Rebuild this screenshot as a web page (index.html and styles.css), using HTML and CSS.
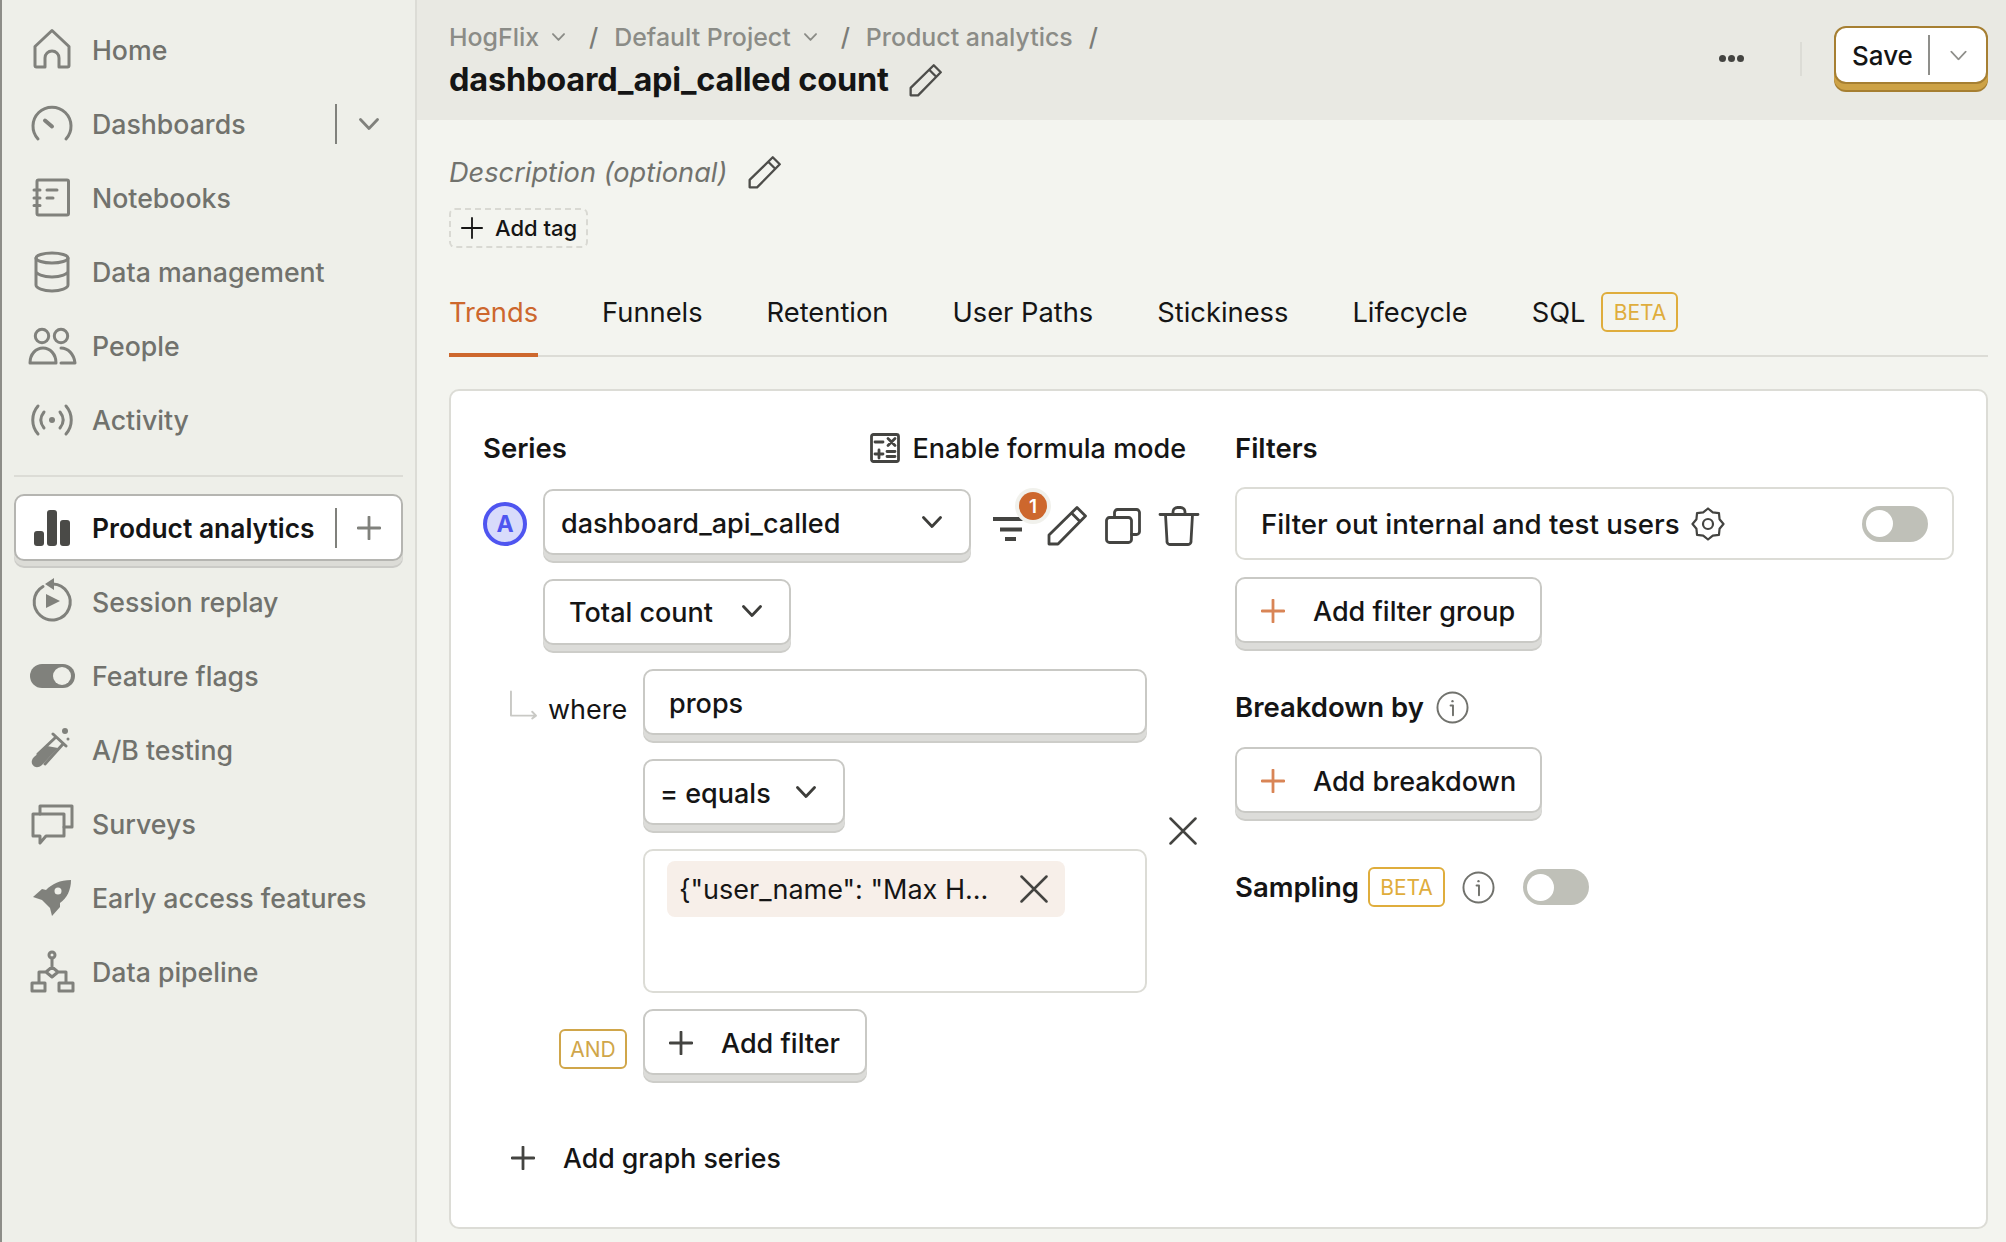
FILE: index.html
```html
<!DOCTYPE html>
<html lang="en">

<head>
  <meta charset="UTF-8">
  <title>dashboard_api_called count</title>
  <link rel="stylesheet" href="styles.css">
</head>

<body>
  <svg class="defs" width="0" height="0">
    <symbol id="i-pencil" viewBox="0 0 40 40">
      <path d="M2 38V29L30 1.500 38.500 10 11 38ZM24.500 7 33 15.500" />
    </symbol>
    <symbol id="i-plus" viewBox="0 0 24 24">
      <path d="M12 1V23M1 12H23" />
    </symbol>
    <symbol id="i-chev" viewBox="0 0 20 12">
      <path d="M1.500 1.500 10 10.500 18.500 1.500" />
    </symbol>
    <symbol id="i-x" viewBox="0 0 28 28">
      <path d="M1.500 1.500 26.500 26.500M26.500 1.500 1.500 26.500" />
    </symbol>
    <symbol id="i-info" viewBox="0 0 34 34">
      <circle cx="17" cy="17" r="15.500" />
      <path d="M15 15H17.500V25" />
      <circle class="solid" cx="17" cy="10.500" r="1.200" />
    </symbol>
  </svg>

  <div class="app">
    <nav class="sidebar">
      <a class="nav-row">
        <svg class="nav-icon" viewBox="0 0 44 44"><path d="M5 18.500 22 2.500 39 18.500V37.500A1.500 1.500 0 0 1 37.500 39H29V30A7 7 0 0 0 15 30V39H6.500A1.500 1.500 0 0 1 5 37.500Z" /></svg>
        <span>Home</span>
      </a>
      <a class="nav-row">
        <svg class="nav-icon" viewBox="0 0 44 44"><path d="M8 37A19 19 0 1 1 36 37" /><path class="needle" d="M15 18.500 22 24.500" /></svg>
        <span>Dashboards</span>
        <span class="nav-side"><svg class="chev-sm" viewBox="0 0 20 12"><use href="#i-chev" /></svg></span>
      </a>
      <a class="nav-row">
        <svg class="nav-icon" viewBox="0 0 44 44"><path d="M8.500 4H37A1.500 1.500 0 0 1 38.500 5.500V37.500A1.500 1.500 0 0 1 37 39H8.500A1.500 1.500 0 0 1 7 37.500V5.500A1.500 1.500 0 0 1 8.500 4ZM4 14H10M4 22H10M4 29.500H10M17 14H27M17 22H23" /></svg>
        <span>Notebooks</span>
      </a>
      <a class="nav-row">
        <svg class="nav-icon" viewBox="0 0 44 44"><ellipse cx="22" cy="8" rx="16" ry="5" /><path d="M6 8V35C6 38 13 41 22 41S38 38 38 35V8M6 21C6 24 13 27 22 27S38 24 38 21" /></svg>
        <span>Data management</span>
      </a>
      <a class="nav-row">
        <svg class="nav-icon" viewBox="0 0 44 44"><circle cx="12" cy="12" r="6.700" /><circle cx="31" cy="12" r="6.700" /><path d="M0 39C0 30 6 24 13 24S26 30 26 39ZM31 24C38 24 44 30 45 39H31" /></svg>
        <span>People</span>
      </a>
      <a class="nav-row">
        <svg class="nav-icon" viewBox="0 0 44 44"><circle class="solid" cx="22" cy="22" r="3" /><path d="M8 8C1 16 1 28 8 36M14 14C10 19 10 25 14 30M36 8C43 16 43 28 36 36M30 14C34 19 34 25 30 30" /></svg>
        <span>Activity</span>
      </a>

      <div class="nav-divider"></div>

      <div class="nav-row-wrap">
        <a class="nav-row nav-active">
          <svg class="nav-icon" viewBox="0 0 44 44"><rect class="solid" x="4" y="25" width="10" height="15" rx="3" /><rect class="solid" x="17" y="4" width="10" height="36" rx="3" /><rect class="solid" x="30" y="14" width="10" height="26" rx="3" /></svg>
          <span>Product analytics</span>
          <span class="nav-side"><svg class="plus-sm" viewBox="0 0 24 24"><use href="#i-plus" /></svg></span>
        </a>
      </div>
      <a class="nav-row">
        <svg class="nav-icon" viewBox="0 0 44 44"><path d="M13 6.500A18 18 0 1 0 23 4" /><path class="solid" d="M24 -2 15 4 24 10ZM16 14 30 21 16 28Z" /></svg>
        <span>Session replay</span>
      </a>
      <a class="nav-row">
        <svg class="nav-icon" viewBox="0 0 44 44"><rect class="solid" x="0" y="10" width="45" height="24" rx="12" /><circle class="knob" cx="32" cy="22" r="9" /></svg>
        <span>Feature flags</span>
      </a>
      <a class="nav-row">
        <svg class="nav-icon" viewBox="0 0 44 44"><path class="solid" d="M4 29 17 18 28 20 12 37C5 43-2 35 4 29Z" /><path d="M23 6 36 18M26 9 8 26M33 16 15 36" /><circle class="solid" cx="35" cy="3" r="3" /><circle class="solid" cx="38" cy="11" r="1.500" /></svg>
        <span>A/B testing</span>
      </a>
      <a class="nav-row">
        <svg class="nav-icon" viewBox="0 0 44 44"><path d="M10 12V4H42V25H34" /><path d="M3 12H34V34H16L10 41V34H3Z" /></svg>
        <span>Surveys</span>
      </a>
      <a class="nav-row">
        <svg class="nav-icon" viewBox="0 0 44 44"><path class="solid rocket" d="M41 4C30 4 22 8 16 14L12 13 3 21 12 24 20 32 22 40 30 31C30 29 30 28 30 27 37 22 41 14 41 4ZM28 11.500A3.500 3.500 0 1 1 28 18.500 3.500 3.500 0 0 1 28 11.500Z" /></svg>
        <span>Early access features</span>
      </a>
      <a class="nav-row">
        <svg class="nav-icon" viewBox="0 0 44 44"><circle cx="22" cy="5" r="3" /><path d="M22 8V17M22 17 28 22 22 27 16 22ZM16 22H9V33M28 22H36V33M2 33H15V41H2ZM29 33H43V41H29Z" /></svg>
        <span>Data pipeline</span>
      </a>
    </nav>

    <main class="main">
      <header class="topbar">
        <div class="topbar-left">
          <div class="crumbs">
            <span>HogFlix</span>
            <svg class="chev-xs" viewBox="0 0 20 12"><use href="#i-chev" /></svg>
            <span class="crumb-sep">/</span>
            <span>Default Project</span>
            <svg class="chev-xs" viewBox="0 0 20 12"><use href="#i-chev" /></svg>
            <span class="crumb-sep">/</span>
            <span>Product analytics</span>
            <span class="crumb-sep">/</span>
          </div>
          <div class="title-row">
            <h1>dashboard_api_called count</h1>
            <svg class="pencil-md" viewBox="0 0 40 40"><use href="#i-pencil" /></svg>
          </div>
        </div>
        <div class="topbar-right">
          <span class="dots"><i></i><i></i><i></i></span>
          <span class="topbar-divider"></span>
          <div class="save-btn">
            <span class="save-label">Save</span>
            <span class="save-side"><svg class="chev-save" viewBox="0 0 20 12"><use href="#i-chev" /></svg></span>
          </div>
        </div>
      </header>

      <div class="content">
        <div class="description">
          <span>Description (optional)</span>
          <svg class="pencil-md" viewBox="0 0 40 40"><use href="#i-pencil" /></svg>
        </div>
        <div class="add-tag">
          <svg class="plus-tag" viewBox="0 0 24 24"><use href="#i-plus" /></svg>
          <span>Add tag</span>
        </div>

        <div class="tabs">
          <a class="tab tab-active">Trends</a>
          <a class="tab">Funnels</a>
          <a class="tab">Retention</a>
          <a class="tab">User Paths</a>
          <a class="tab">Stickiness</a>
          <a class="tab">Lifecycle</a>
          <a class="tab tab-sql">SQL <span class="badge badge-beta">BETA</span></a>
        </div>

        <section class="card">
          <div class="col-series">
            <div class="series-head">
              <h3>Series</h3>
              <div class="formula">
                <svg class="calc" viewBox="0 0 30 30">
                  <rect x="1.500" y="1.500" width="27" height="27" rx="2" />
                  <path d="M5 9H13M18 5.500 25 12.500M25 5.500 18 12.500M5 21H13M9 17V25M17 18.500H25M17 23.500H25" />
                </svg>
                <span>Enable formula mode</span>
              </div>
            </div>

            <div class="series-row">
              <span class="letter">A</span>
              <div class="btn select-event">
                <span>dashboard_api_called</span>
                <svg class="chev" viewBox="0 0 20 12"><use href="#i-chev" /></svg>
              </div>
              <div class="series-tools">
                <span class="filter-icon">
                  <svg class="filter-lines" viewBox="0 0 30 24"><path d="M0 2H30M7 12.500H29M12 22H23" /></svg>
                  <span class="filter-badge">1</span>
                </span>
                <svg class="tool-pencil" viewBox="0 0 40 40"><use href="#i-pencil" /></svg>
                <svg class="tool-copy" viewBox="0 0 36 36"><rect x="1.500" y="9.500" width="25" height="25" rx="3" /><path d="M9.500 9.500V4.500A3 3 0 0 1 12.500 1.500H31.500A3 3 0 0 1 34.500 4.500V23.500A3 3 0 0 1 31.500 26.500H26.500" /></svg>
                <svg class="tool-trash" viewBox="0 0 40 40"><path d="M1 8.500H39M14 8.500V6A4.500 4.500 0 0 1 18.500 1.500H21.500A4.500 4.500 0 0 1 26 6V8.500M6.500 8.500 8 35A3 3 0 0 0 11 38.500H29A3 3 0 0 0 32 35L33.500 8.500" /></svg>
              </div>
            </div>

            <div class="btn select-math">
              <span>Total count</span>
              <svg class="chev" viewBox="0 0 20 12"><use href="#i-chev" /></svg>
            </div>

            <div class="where-grid">
              <div class="where-label">
                <svg class="where-arrow" viewBox="0 0 28 28"><path d="M1 0V25H26M23 21 27 25 23 28" /></svg>
                <span>where</span>
              </div>
              <div class="btn input-props">props</div>
              <span class="remove-filter"><svg class="x-lg" viewBox="0 0 28 28"><use href="#i-x" /></svg></span>
              <div class="btn select-op">
                <span>= equals</span>
                <svg class="chev" viewBox="0 0 20 12"><use href="#i-chev" /></svg>
              </div>
              <div class="value-box">
                <div class="chip">
                  <span>{"user_name": "Max H...</span>
                  <svg class="x-lg" viewBox="0 0 28 28"><use href="#i-x" /></svg>
                </div>
              </div>
            </div>

            <div class="and-row">
              <div class="and-cell"><span class="badge badge-and">AND</span></div>
              <div class="btn btn-add add-filter">
                <svg class="plus" viewBox="0 0 24 24"><use href="#i-plus" /></svg>
                <span>Add filter</span>
              </div>
            </div>

            <div class="add-series">
              <svg class="plus" viewBox="0 0 24 24"><use href="#i-plus" /></svg>
              <span>Add graph series</span>
            </div>
          </div>

          <div class="col-filters">
            <h3>Filters</h3>
            <div class="test-users">
              <span>Filter out internal and test users</span>
              <svg class="gear" viewBox="0 0 34 34">
                <path d="M32.500 17 28.550 21.780 27.960 27.960 21.780 28.550 17 32.500 12.220 28.550 6.040 27.960 5.450 21.780 1.500 17 5.450 12.220 6.040 6.040 12.220 5.450 17 1.500 21.780 5.450 27.960 6.040 28.550 12.220Z" />
                <circle cx="17" cy="17" r="5" />
              </svg>
              <span class="toggle toggle-right"><i></i></span>
            </div>
            <div class="btn btn-add btn-orange add-group">
              <svg class="plus" viewBox="0 0 24 24"><use href="#i-plus" /></svg>
              <span>Add filter group</span>
            </div>

            <div class="breakdown-head">
              <h3>Breakdown by</h3>
              <svg class="info" viewBox="0 0 34 34"><use href="#i-info" /></svg>
            </div>
            <div class="btn btn-add btn-orange add-breakdown">
              <svg class="plus" viewBox="0 0 24 24"><use href="#i-plus" /></svg>
              <span>Add breakdown</span>
            </div>

            <div class="sampling">
              <h3>Sampling</h3>
              <span class="badge badge-beta">BETA</span>
              <svg class="info" viewBox="0 0 34 34"><use href="#i-info" /></svg>
              <span class="toggle"><i></i></span>
            </div>
          </div>
        </section>
      </div>
    </main>
  </div>
</body>

</html>
```

FILE: styles.css
```css
* {
  box-sizing: border-box;
}

html,
body {
  margin: 0;
  height: 100%;
  overflow: hidden;
}

body {
  font-family: 'Inter', 'Liberation Sans', sans-serif;
  font-size: 27px;
  color: #151515;
  background: #f3f4ef;
}

svg {
  fill: none;
  stroke: currentColor;
  stroke-width: 2.800;
  stroke-linecap: round;
  stroke-linejoin: round;
  overflow: visible;
  flex: none;
}

.defs {
  position: absolute;
}

.solid {
  fill: currentColor;
  stroke: none;
}

h1,
h3 {
  margin: 0;
}

h3 {
  font-size: 27.500px;
  font-weight: 600;
  line-height: 40px;
  white-space: nowrap;
}

.app {
  display: flex;
  height: 1242px;
}

/* sidebar */
.sidebar {
  width: 417px;
  flex: none;
  padding: 13px 12px 0 12px;
  background: #eeefe9;
  border-left: 2px solid #8d8d88;
  border-right: 2px solid #dcdcd6;
}

.nav-row {
  display: flex;
  align-items: center;
  gap: 18px;
  height: 74px;
  padding: 0 2px 0 16px;
  font-size: 26.700px;
  font-weight: 500;
  color: #71726d;
  white-space: nowrap;
}

.nav-icon {
  width: 44px;
  height: 44px;
  color: #80817c;
  stroke-width: 3;
}

.needle {
  stroke-width: 4;
}

.knob {
  fill: #eeefe9;
  stroke: none;
}

.rocket {
  fill-rule: evenodd;
}

.nav-side {
  margin-left: auto;
  width: 66px;
  height: 40px;
  display: flex;
  align-items: center;
  justify-content: center;
  border-left: 2px solid #80817c;
}

.chev-sm {
  width: 20px;
  height: 12px;
  color: #80817c;
}

.plus-sm {
  width: 24px;
  height: 24px;
  color: #80817c;
}

.nav-divider {
  height: 2px;
  margin: 18px 0 13px;
  background: #dcdcd6;
}

.nav-row-wrap {
  height: 75px;
  padding-top: 4px;
}

.nav-active {
  height: 67px;
  background: #fff;
  color: #151515;
  font-size: 26.400px;
  font-weight: 600;
  border: 2px solid #b5b5b1;
  border-radius: 10px;
  padding: 0 0 0 14px;
  box-shadow: 0 5px 0 #dcdcd7, 0 7px 0 #cbcbc7;
}

.nav-active .nav-icon {
  color: #4a4a47;
}

/* top bar */
.main {
  flex: 1;
  min-width: 0;
}

.topbar {
  height: 120px;
  display: flex;
  justify-content: space-between;
  padding: 0 18px 0 32px;
  background: #e9e9e3;
}

.crumbs {
  display: flex;
  align-items: center;
  height: 34px;
  margin-top: 20px;
  font-size: 24.900px;
  font-weight: 500;
  color: #8b8c87;
}

.chev-xs {
  width: 13px;
  height: 8px;
  margin-left: 13px;
}

.crumb-sep {
  margin: 0 16px 0 24px;
  color: #7b7c77;
}

.crumb-sep:last-child {
  margin-left: 16px;
}

.title-row {
  display: flex;
  align-items: center;
  gap: 20px;
  height: 44px;
  margin-top: 4px;
}

h1 {
  font-size: 32.500px;
  font-weight: 700;
  line-height: 44px;
  letter-spacing: -0.2px;
}

.pencil-md {
  width: 33px;
  height: 33px;
  color: #4d4d4a;
}

.topbar-right {
  display: flex;
  align-items: flex-start;
}

.dots {
  display: flex;
  gap: 2px;
  margin-top: 55px;
  margin-right: 56px;
}

.dots i {
  width: 7px;
  height: 7px;
  border-radius: 50%;
  background: #444441;
}

.topbar-divider {
  width: 2px;
  height: 34px;
  margin-top: 42px;
  margin-right: 32px;
  background: #dcdcd6;
}

.save-btn {
  display: flex;
  align-items: center;
  width: 154px;
  height: 58px;
  margin-top: 26px;
  background: #fff;
  border: 2px solid #a67f32;
  border-radius: 12px;
  box-shadow: 0 6px 0 #cda246, 0 8px 0 #a67f32;
}

.save-label {
  width: 92px;
  padding-left: 16px;
  font-size: 26px;
  font-weight: 500;
}

.save-side {
  display: flex;
  align-items: center;
  justify-content: center;
  flex: 1;
  height: 40px;
  border-left: 2px solid #8f8f8b;
}

.chev-save {
  width: 17px;
  height: 11px;
  color: #8f8f8b;
  stroke-width: 2;
}

/* content */
.content {
  padding: 32px 18px 0 32px;
}

.description {
  display: flex;
  align-items: center;
  gap: 21px;
  height: 40px;
  font-size: 27.200px;
  font-style: italic;
  color: #71726d;
}

.add-tag {
  display: inline-flex;
  align-items: center;
  gap: 12px;
  height: 40px;
  margin-top: 16px;
  padding: 0 9px 0 10px;
  font-size: 22px;
  font-weight: 500;
  border: 2px dashed #d9d9d3;
  border-radius: 6px;
}

.plus-tag {
  width: 22px;
  height: 22px;
  stroke-width: 2;
}

.tabs {
  display: flex;
  gap: 64px;
  margin-top: 24px;
  border-bottom: 2px solid #dcdcd6;
}

.tab {
  display: flex;
  align-items: center;
  height: 85px;
  font-size: 27.300px;
  padding-bottom: 25px;
  padding-top: 20px;
  margin-bottom: -2px;
}

.tab-active {
  color: #cd672d;
  padding-bottom: 21px;
  border-bottom: 4px solid #cd672d;
}

.tab-sql {
  gap: 16px;
}

.badge {
  display: inline-flex;
  align-items: center;
  justify-content: center;
  font-size: 21px;
  border: 2px solid #dfad3c;
  border-radius: 6px;
  color: #dfad3c;
  height: 40px;
}

.badge-beta {
  width: 77px;
}

.badge-and {
  width: 68px;
  border-color: #d0a64a;
  color: #d0a64a;
}

.card {
  display: flex;
  height: 840px;
  margin-top: 32px;
  padding: 37px 32px 0;
  background: #fff;
  border: 2px solid #dcdcd6;
  border-radius: 10px;
}

.col-series {
  width: 752px;
  flex: none;
}

.series-head {
  display: flex;
  justify-content: space-between;
  align-items: center;
  width: 703px;
  height: 40px;
}

.formula {
  display: flex;
  align-items: center;
  gap: 13px;
  font-weight: 500;
}

.calc {
  width: 30px;
  height: 30px;
  color: #444441;
}

.series-row {
  display: flex;
  align-items: center;
  margin-top: 21px;
}

.letter {
  display: flex;
  align-items: center;
  justify-content: center;
  width: 44px;
  height: 44px;
  margin-top: 4px;
  margin-right: 16px;
  font-size: 23px;
  font-weight: 700;
  color: #4f55f0;
  background: #d8dbfb;
  border: 4px solid #4f55f0;
  border-radius: 50%;
}

.btn {
  display: flex;
  align-items: center;
  height: 66px;
  padding-top: 2px;
  background: #fff;
  border: 2px solid #c9c9c5;
  border-radius: 10px;
  font-weight: 500;
  white-space: nowrap;
  box-shadow: 0 6px 0 #dcdcd9, 0 8px 0 #cdcdc9;
}

.chev {
  width: 20px;
  height: 12px;
  margin-top: -2px;
  color: #3d3d3a;
}

.select-event {
  width: 428px;
  justify-content: space-between;
  padding: 2px 27px 0 16px;
}

.series-tools {
  display: flex;
  align-items: center;
  margin-left: 22px;
  height: 66px;
  color: #444441;
}

.filter-icon {
  position: relative;
  display: flex;
  width: 30px;
  margin-top: 14px;
}

.filter-lines {
  width: 30px;
  height: 24px;
  stroke-width: 4;
  stroke-linecap: butt;
}

.filter-badge {
  position: absolute;
  left: 26px;
  top: -25px;
  display: flex;
  align-items: center;
  justify-content: center;
  width: 28px;
  height: 28px;
  font-size: 19px;
  font-weight: 600;
  color: #fff;
  background: #cd672d;
  border-radius: 50%;
  box-shadow: 0 0 0 4px #f1f1ec;
}

.tool-pencil {
  width: 40px;
  height: 40px;
  margin-left: 24px;
  margin-top: 8px;
}

.tool-copy {
  width: 36px;
  height: 36px;
  margin-left: 18px;
  margin-top: 8px;
}

.tool-trash {
  width: 40px;
  height: 40px;
  margin-left: 18px;
  margin-top: 8px;
}

.select-math {
  width: 248px;
  justify-content: space-between;
  margin-top: 24px;
  margin-left: 60px;
  padding: 0 27px 0 24px;
}

.where-grid {
  display: grid;
  grid-template-columns: 160px 504px auto;
  grid-template-rows: 66px 66px 144px;
  row-gap: 24px;
  margin-top: 24px;
}

.where-label {
  display: flex;
  align-items: center;
  padding: 14px 17px 0 27px;
  gap: 11px;
}

.where-arrow {
  width: 27px;
  height: 28px;
  margin-top: -8px;
  color: #c9c9c5;
  stroke-width: 2;
}

.input-props {
  padding-left: 24px;
}

.remove-filter {
  grid-column: 3;
  grid-row: 1 / 4;
  align-self: center;
  display: flex;
  margin-left: 22px;
  color: #444441;
}

.x-lg {
  width: 28px;
  height: 28px;
  stroke-width: 2.500;
}

.select-op {
  grid-column: 2;
  grid-row: 2;
  width: 202px;
  justify-content: space-between;
  padding: 2px 27px 0 15px;
}

.value-box {
  grid-column: 2;
  grid-row: 3;
  padding: 10px 22px;
  background: #fff;
  border: 2px solid #dcdcd6;
  border-radius: 10px;
}

.chip {
  display: flex;
  align-items: center;
  justify-content: space-between;
  width: 398px;
  height: 56px;
  padding: 0 17px 0 12px;
  background: #f7efe9;
  border-radius: 8px;
  color: #444441;
  font-size: 27px;
  white-space: nowrap;
}

.chip span {
  color: #151515;
}

.and-row {
  display: flex;
  margin-top: 16px;
}

.and-cell {
  display: flex;
  justify-content: flex-end;
  width: 160px;
  padding: 20px 16px 0 0;
}

.btn-add {
  gap: 28px;
  padding: 2px 24px 0;
}

.plus {
  width: 24px;
  height: 24px;
  color: #444441;
}

.add-filter {
  width: 224px;
}

.add-series {
  display: flex;
  align-items: center;
  gap: 28px;
  margin-top: 63px;
  margin-left: 28px;
  height: 40px;
  font-size: 26.700px;
  font-weight: 500;
}

/* filters column */
.col-filters {
  flex: 1;
}

.test-users {
  display: flex;
  align-items: center;
  gap: 11px;
  width: 719px;
  height: 73px;
  margin-top: 19px;
  padding: 0 24px;
  border: 2px solid #dcdcd6;
  border-radius: 10px;
  font-size: 27.700px;
  font-weight: 500;
  white-space: nowrap;
}

.gear {
  width: 34px;
  height: 34px;
  color: #444441;
  stroke-width: 2.200;
}

.toggle {
  display: inline-flex;
  align-items: center;
  width: 66px;
  height: 36px;
  padding-left: 4px;
  background: #bfc0b8;
  border-radius: 18px;
}

.toggle i {
  width: 27px;
  height: 27px;
  background: #fff;
  border-radius: 50%;
}

.toggle-right {
  margin-left: auto;
}

.btn-orange .plus {
  color: #d98556;
}

.add-group,
.add-breakdown {
  width: 307px;
}

.add-group {
  margin-top: 17px;
}

.breakdown-head {
  display: flex;
  align-items: center;
  gap: 12px;
  height: 40px;
  margin-top: 44px;
}

.info {
  width: 33px;
  height: 33px;
  color: #71726d;
  stroke-width: 2;
}

.add-breakdown {
  margin-top: 20px;
}

.sampling {
  display: flex;
  align-items: center;
  margin-top: 54px;
  height: 40px;
}

.sampling .badge {
  margin-left: 9px;
}

.sampling .info {
  margin-left: 17px;
}

.sampling .toggle {
  margin-left: 28px;
}
```
